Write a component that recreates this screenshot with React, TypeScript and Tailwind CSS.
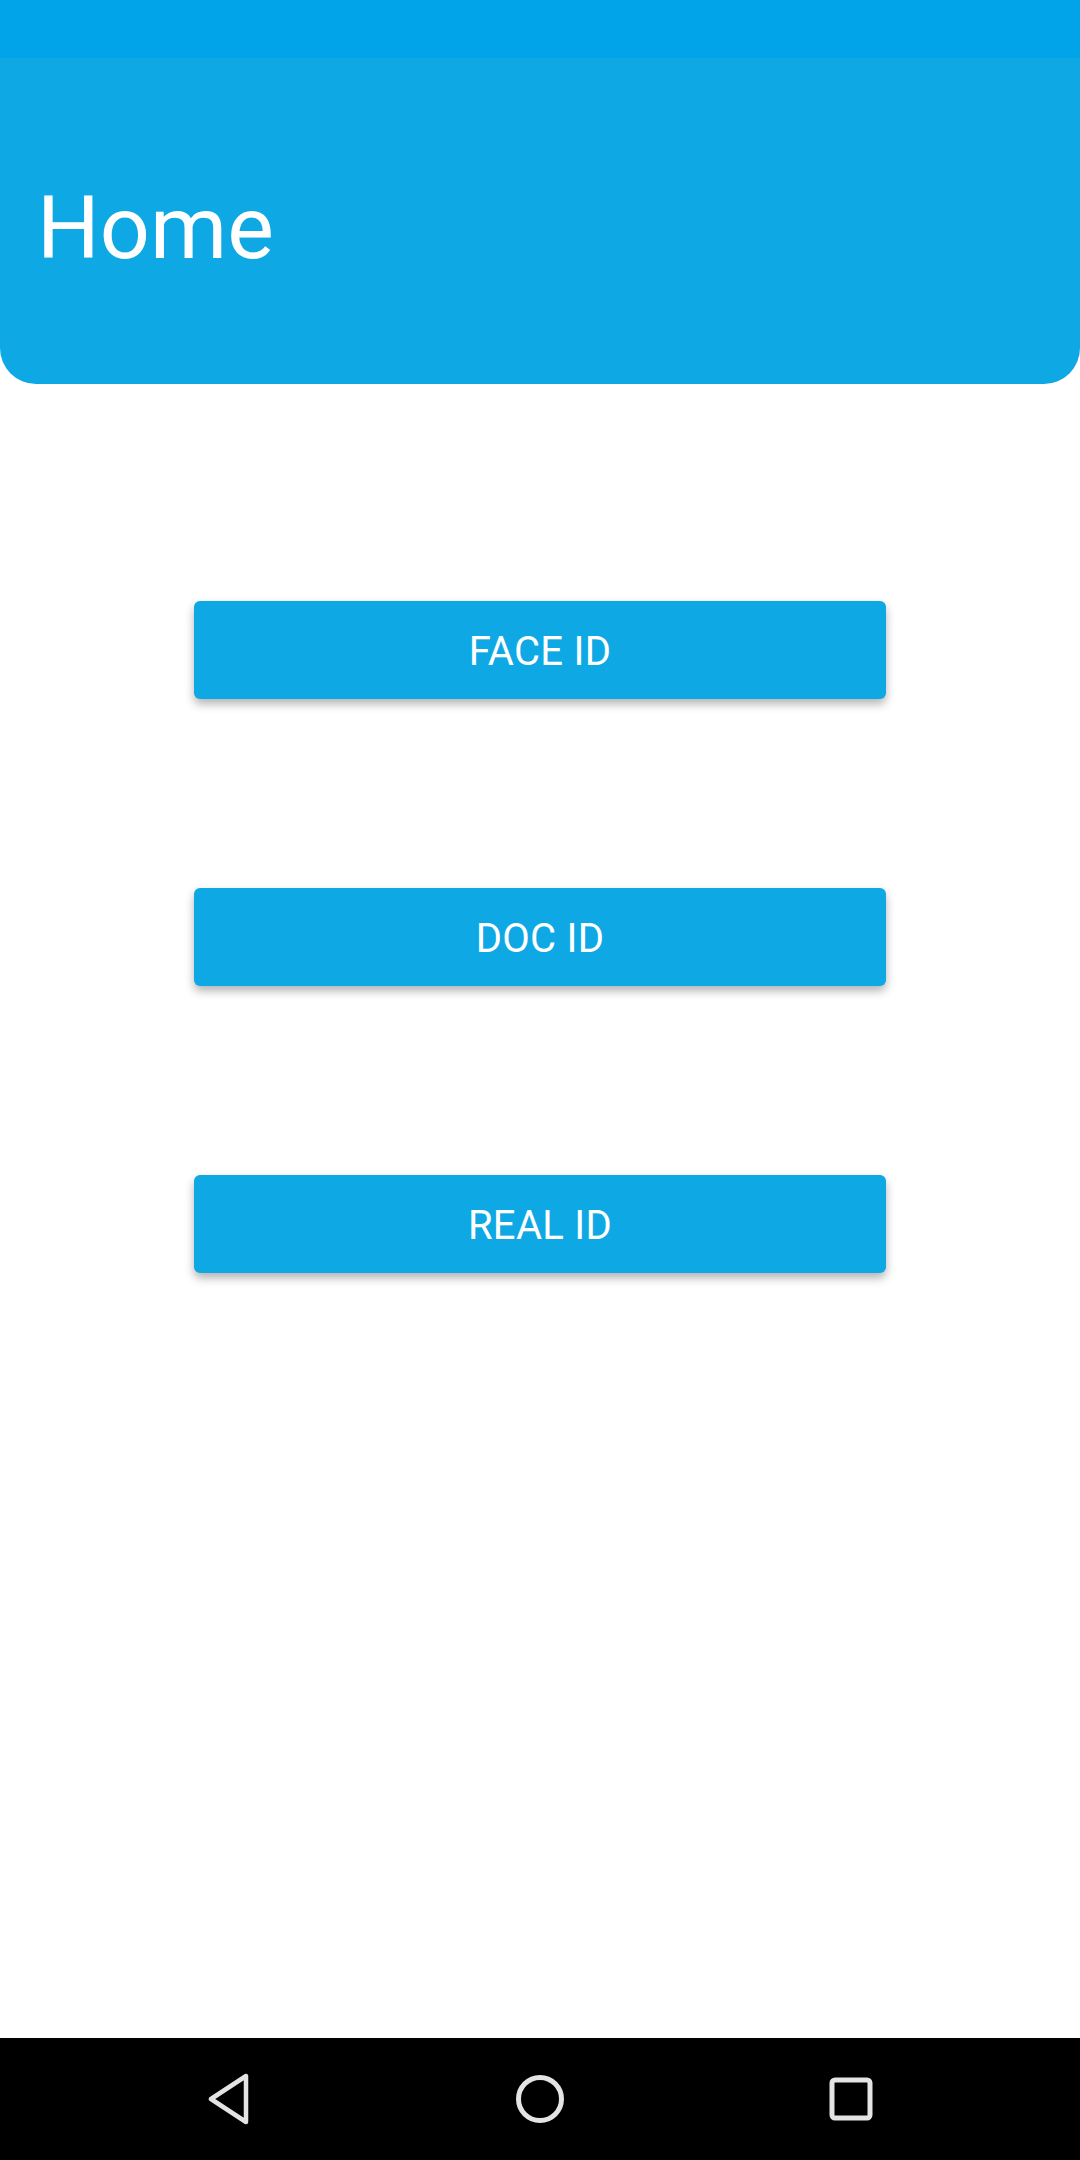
import React from 'react';

const buttons = ['FACE ID', 'DOC ID', 'REAL ID'];

const NavBar = () => (
  <div className="mt-auto h-[122px] bg-black flex justify-center items-center">
    <div className="w-[311px] flex justify-center">
      <svg width="48" height="52" viewBox="0 0 48 52" fill="none">
        <path d="M41 3 L41 49 L6 26 Z" stroke="#e4e4e4" strokeWidth="4.5" strokeLinejoin="round" />
      </svg>
    </div>
    <div className="w-[311px] flex justify-center">
      <svg width="52" height="52" viewBox="0 0 52 52" fill="none">
        <circle cx="26" cy="26" r="21.5" stroke="#e4e4e4" strokeWidth="5" />
      </svg>
    </div>
    <div className="w-[311px] flex justify-center">
      <svg width="44" height="44" viewBox="0 0 44 44" fill="none">
        <rect x="3" y="3" width="38" height="38" rx="3" stroke="#e4e4e4" strokeWidth="5" />
      </svg>
    </div>
  </div>
);

const App = () => {
  return (
    <div className="w-[1080px] h-[2160px] bg-white flex flex-col font-['Roboto',sans-serif]">
      <div className="h-[58px] bg-[#01a4e8]" />
      <div className="h-[326px] bg-[#0ea8e4] rounded-b-[36px] pl-[37px] pt-[126px]">
        <h1 className="text-white text-[88px] leading-none font-normal">Home</h1>
      </div>
      <div className="mt-[217px] flex flex-col items-center gap-[189px]">
        {buttons.map(label => (
          <button
            key={label}
            className="w-[692px] h-[98px] bg-[#0ea8e4] rounded-[6px] text-white text-[40px] tracking-[0.3px] pt-[4px] flex items-center justify-center shadow-[0_5px_10px_rgba(0,0,0,0.3)]"
          >
            {label}
          </button>
        ))}
      </div>
      <NavBar />
    </div>
  );
};

export default App;
